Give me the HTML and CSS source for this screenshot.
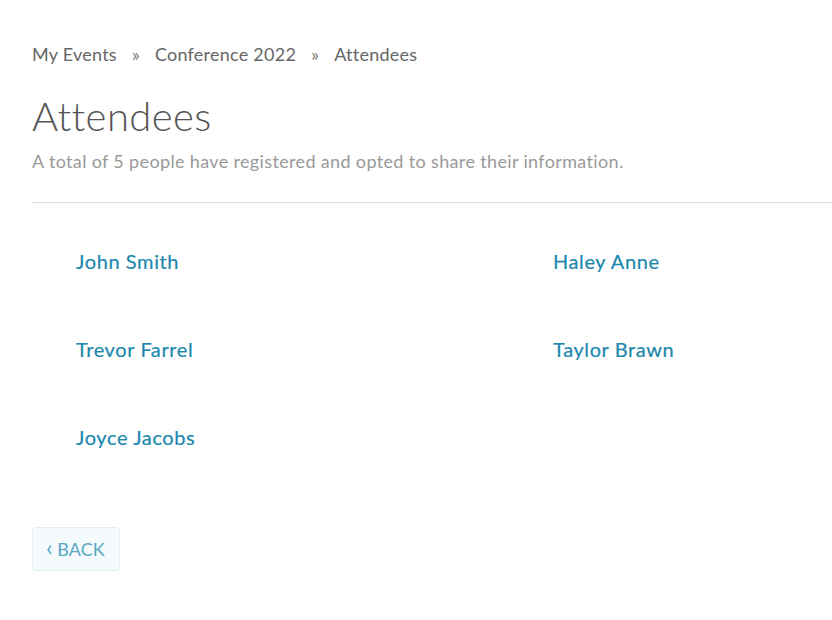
FILE: index.html
```html
<!DOCTYPE html>
<html lang="en">
<head>
  <meta charset="UTF-8">
  <title>Attendees</title>
  <link rel="stylesheet" href="styles.css">
</head>
<body>
  <div id="page">
    <!-- Breadcrumb -->
    <div id="breadcrumb">
      <a href="#">My Events</a>
      <span class="sep">&raquo;</span>
      <a href="#">Conference 2022</a>
      <span class="sep">&raquo;</span>
      <span>Attendees</span>
    </div>

    <h1>Attendees</h1>
    <p class="subtitle">A total of 5 people have registered and opted to share their information.</p>

    <!-- Attendee list -->
    <div id="attendees">
      <a class="attendee" href="#">John Smith</a>
      <a class="attendee" href="#">Haley Anne</a>
      <a class="attendee" href="#">Trevor Farrel</a>
      <a class="attendee" href="#">Taylor Brawn</a>
      <a class="attendee" href="#">Joyce Jacobs</a>
    </div>

    <a class="back" href="#"><span class="chev">&lsaquo;</span> BACK</a>
  </div>
</body>
</html>
```

FILE: styles.css
```css
body {
  margin: 0;
  font-family: Lato, "Open Sans", sans-serif;
  background: white;
  color: #555;
}
#page {
  padding: 43px 0 0 32px;
}
/* Breadcrumb styling */
#breadcrumb {
  font-size: 18px;
  color: #666;
  display: flex;
  gap: 14px;
  letter-spacing: 0.25px;
}
#breadcrumb a {
  color: #666;
  text-decoration: none;
}
.sep {
  color: #777;
  padding: 0 1px;
}
h1 {
  font-size: 40px;
  font-weight: 300;
  color: #555;
  margin: 27px 0 0;
  line-height: 1.2;
  letter-spacing: 0.4px;
}
.subtitle {
  font-size: 18px;
  color: #999;
  margin: 10px 0 0;
  padding-bottom: 30px;
  border-bottom: 1px solid #ddd;
  letter-spacing: 0.35px;
}
/* Attendee grid */
#attendees {
  display: grid;
  grid-template-columns: 477px 1fr;
  row-gap: 64px;
  padding: 46px 0 0 44px;
}
.attendee {
  font-size: 20px;
  color: #1b87ad;
  text-decoration: none;
  line-height: 24px;
  letter-spacing: 0.6px;
  -webkit-text-stroke: 0.2px #1b87ad;
}
a.back {
  display: inline-block;
  margin-top: 78px;
  padding: 10px 14px 10px 13px;
  font-size: 18px;
  color: #5aa7c5;
  text-decoration: none;
  background: #f5fbfd;
  border: 1px solid #e2eef2;
  border-radius: 4px;
}
.chev {
  font-size: 24px;
  line-height: 18px;
}
```
